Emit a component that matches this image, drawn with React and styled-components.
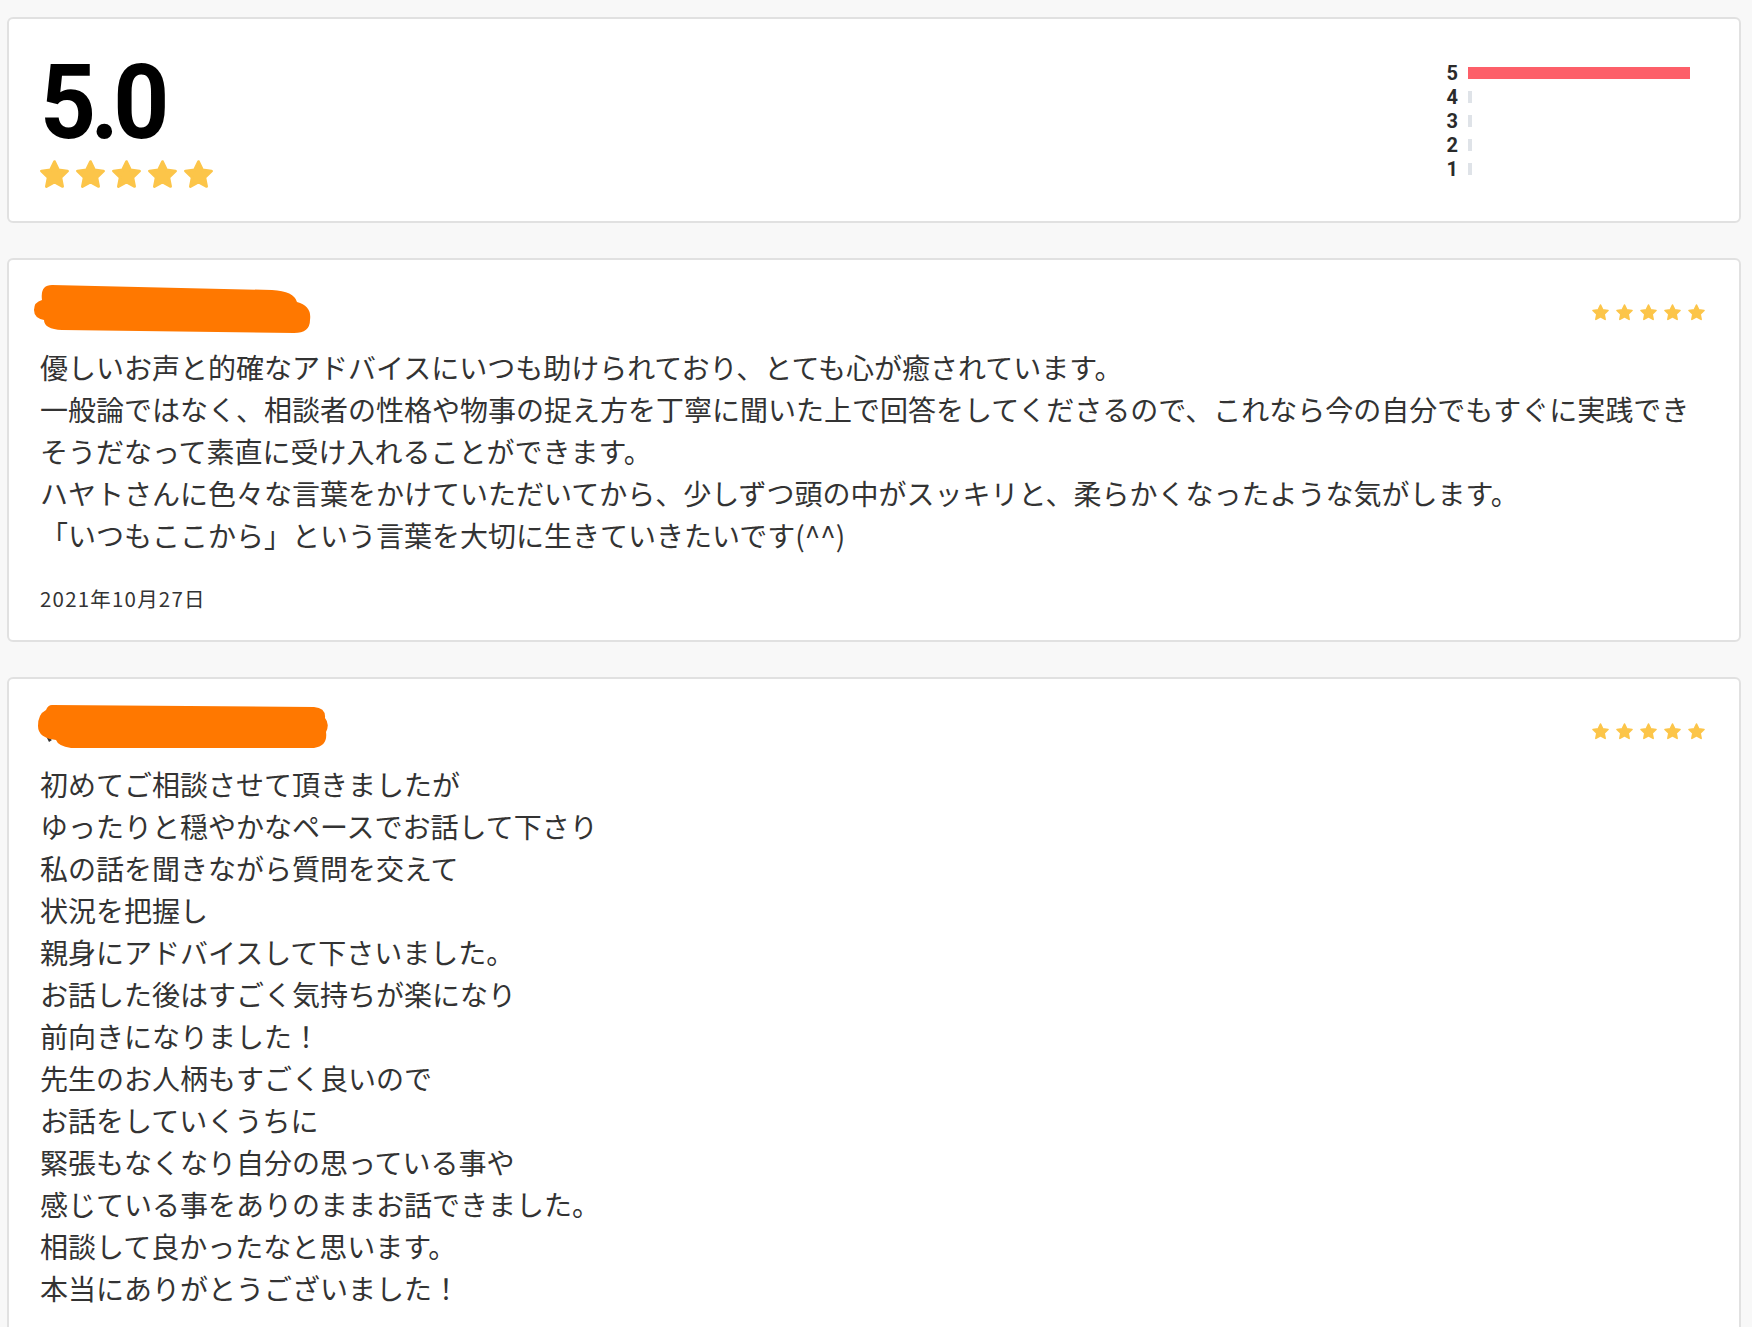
import React from "react";
import styled, { createGlobalStyle } from "styled-components";

const GlobalStyle = createGlobalStyle`
  html, body { margin: 0; padding: 0; }
  body {
    background: #f8f8f8;
    font-family: "Noto Sans CJK JP", "Noto Sans", sans-serif;
    color: #333;
  }
`;

const Page = styled.div`
  display: flex;
  flex-direction: column;
  gap: 35px;
  padding: 17px 11px 0 7px;
  height: 1327px;
  overflow: hidden;
  box-sizing: border-box;
`;

const Card = styled.section`
  background: #fff;
  border: 2px solid #e1e1e1;
  border-radius: 6px;
  flex-shrink: 0;
`;

const SummaryCard = styled(Card)`
  display: flex;
  justify-content: space-between;
  align-items: flex-start;
  padding: 32px 49px 30px 31px;
`;

const ScoreBlock = styled.div`
  display: flex;
  flex-direction: column;
`;

const Score = styled.div`
  font-family: Roboto, "Liberation Sans", sans-serif;
  font-weight: 700;
  font-size: 104px;
  line-height: 104px;
  letter-spacing: -6px;
  color: #000;
  transform: scaleX(0.94);
  transform-origin: left center;
`;

const StarRow = styled.div`
  display: flex;
  gap: ${(p) => p.$gap}px;
  margin-top: ${(p) => p.$mt || 0}px;
  margin-left: ${(p) => p.$ml || 0}px;
`;

const Chart = styled.div`
  display: grid;
  grid-template-columns: 14px 222px;
  column-gap: 10px;
  margin-top: 10px;
`;

const ChartLabel = styled.div`
  font-family: Roboto, "Liberation Sans", sans-serif;
  font-weight: 700;
  font-size: 20px;
  line-height: 24px;
  height: 24px;
  color: #2b2b2b;
  text-align: right;
`;

const Track = styled.div`
  display: flex;
  align-items: center;
  height: 24px;
`;

const Fill = styled.div`
  height: 12px;
  background: ${(p) => (p.$empty ? "#dfe3e8" : "#fd5f69")};
`;

const ReviewCard = styled(Card)`
  padding: 23px 33px ${(p) => p.$pb}px 31px;
`;

const Header = styled.div`
  display: flex;
  justify-content: space-between;
  align-items: flex-start;
  height: 52px;
`;

const Redact = styled.svg`
  margin-left: -8px;
  display: block;
`;

const Body = styled.div`
  margin-top: ${(p) => p.$mt}px;
  font-size: 28px;
  line-height: 42px;
  color: #333;
`;

const Line = styled.div`
  white-space: nowrap;
`;

const DateText = styled.div`
  margin-top: 30px;
  font-size: 20.5px;
  line-height: 24px;
  letter-spacing: 1.2px;
  color: #333;
`;

const STAR =
  "M12 2.6l2.9 6.1 6.6.8-4.9 4.6 1.3 6.6L12 17.4l-5.9 3.3 1.3-6.6-4.9-4.6 6.6-.8z";

const Star = ({ size }) => (
  <svg width={size} height={size} viewBox="0 0 24 24">
    <path
      d={STAR}
      fill="#fcc549"
      stroke="#fcc549"
      strokeWidth="2"
      strokeLinejoin="round"
    />
  </svg>
);

const Stars = ({ size, gap, mt, ml }) => (
  <StarRow $gap={gap} $mt={mt} $ml={ml}>
    {[0, 1, 2, 3, 4].map((i) => (
      <Star key={i} size={size} />
    ))}
  </StarRow>
);

const dist = [
  { label: 5, pct: 100 },
  { label: 4, pct: 0 },
  { label: 3, pct: 0 },
  { label: 2, pct: 0 },
  { label: 1, pct: 0 },
];

const reviews = [
  {
    path: "M20 2 L240 7 Q262 8 265 19 Q280 23 278 37 Q278 50 262 50 L30 47 Q12 46 12 37 Q2 35 2 27 Q2 19 10 17 Q8 2 20 2 Z",
    mark: false,
    bodyMt: 11,
    lines: [
      "優しいお声と的確なアドバイスにいつも助けられており、とても心が癒されています。",
      "一般論ではなく、相談者の性格や物事の捉え方を丁寧に聞いた上で回答をしてくださるので、これなら今の自分でもすぐに実践でき",
      "そうだなって素直に受け入れることができます。",
      "ハヤトさんに色々な言葉をかけていただいてから、少しずつ頭の中がスッキリと、柔らかくなったような気がします。",
      "「いつもここから」という言葉を大切に生きていきたいです(^^)",
    ],
    date: "2021年10月27日",
  },
  {
    path: "M20 3 L282 5 Q294 6 293 16 Q298 22 294 30 Q296 44 282 46 L39 46 Q26 44 24 38 Q6 36 6 24 Q6 12 14 8 Q16 3 20 3 Z",
    mark: true,
    bodyMt: 9,
    lines: [
      "初めてご相談させて頂きましたが",
      "ゆったりと穏やかなペースでお話して下さり",
      "私の話を聞きながら質問を交えて",
      "状況を把握し",
      "親身にアドバイスして下さいました。",
      "お話した後はすごく気持ちが楽になり",
      "前向きになりました！",
      "先生のお人柄もすごく良いので",
      "お話をしていくうちに",
      "緊張もなくなり自分の思っている事や",
      "感じている事をありのままお話できました。",
      "相談して良かったなと思います。",
      "本当にありがとうございました！",
    ],
    date: null,
  },
];

export default function App() {
  return (
    <>
      <GlobalStyle />
      <Page>
        <SummaryCard>
          <ScoreBlock>
            <Score>5.0</Score>
            <Stars size={33} gap={3} mt={3} ml={-2} />
          </ScoreBlock>
          <Chart>
            {dist.map((d) => (
              <React.Fragment key={d.label}>
                <ChartLabel>{d.label}</ChartLabel>
                <Track>
                  <Fill
                    $empty={d.pct === 0}
                    style={{ width: d.pct === 0 ? "4px" : `${d.pct}%` }}
                  />
                </Track>
              </React.Fragment>
            ))}
          </Chart>
        </SummaryCard>

        {reviews.map((r, i) => (
          <ReviewCard key={i} $pb={r.date ? 30 : 80}>
            <Header>
              <Redact width="300" height="52" viewBox="0 0 300 52">
                {r.mark && <path d="M14 34 L20 38 L17 40 Z" fill="#333" />}
                <path d={r.path} fill="#ff7800" />
              </Redact>
              <Stars size={19} gap={5} mt={20} />
            </Header>
            <Body $mt={r.bodyMt}>
              {r.lines.map((l, j) => (
                <Line key={j}>{l}</Line>
              ))}
            </Body>
            {r.date && <DateText>{r.date}</DateText>}
          </ReviewCard>
        ))}
      </Page>
    </>
  );
}
